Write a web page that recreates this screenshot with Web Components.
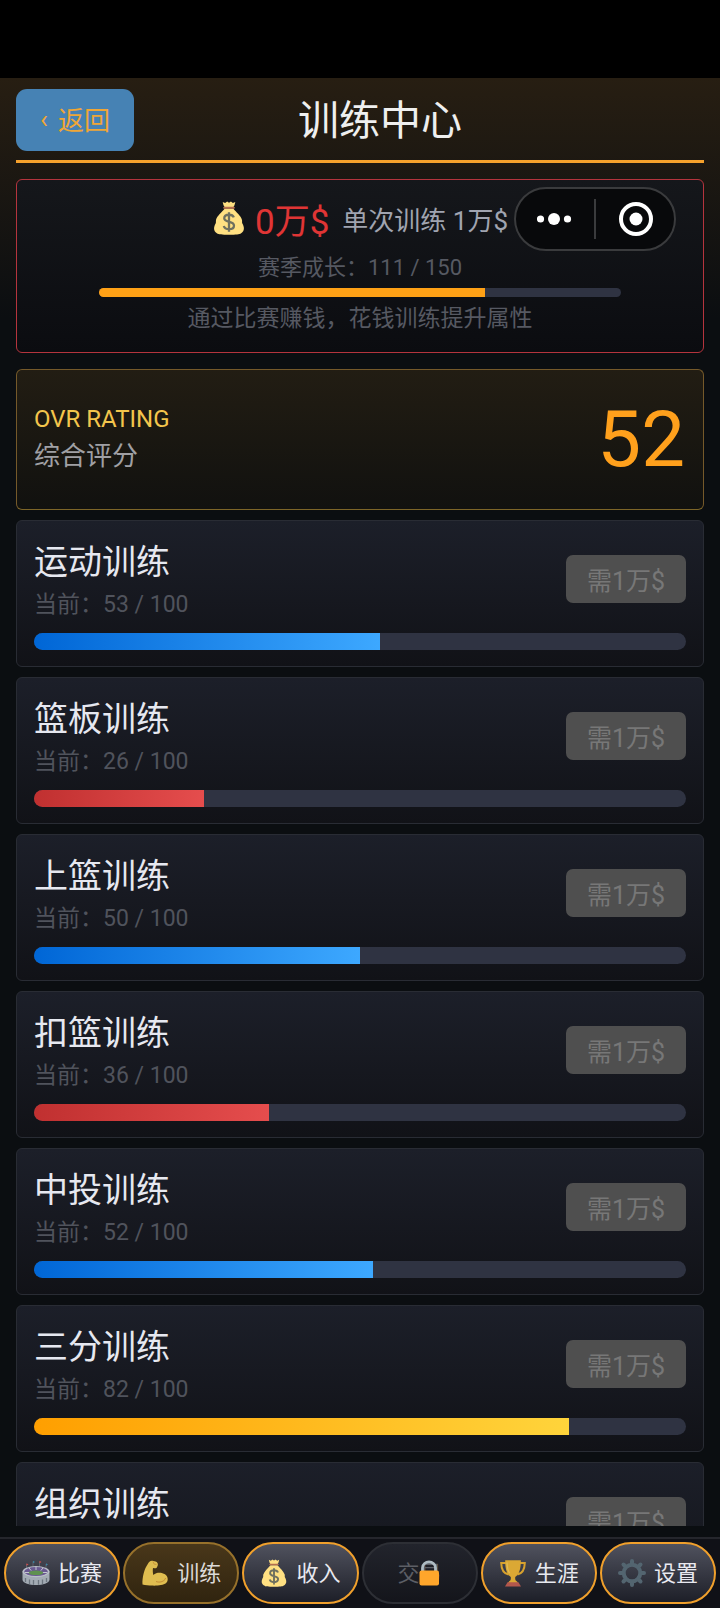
<!DOCTYPE html>
<html lang="zh-CN">
<head>
<meta charset="utf-8">
<meta name="viewport" content="width=device-width, initial-scale=1">
<title>训练中心</title>
<style>
html, body { margin: 0; height: 100%; background: #000; }
body { font-family: Roboto, "Noto Sans CJK SC", sans-serif; color: #e6e8ee; }
</style>
</head>
<body>
<training-app></training-app>
<script>
const define = (name, html, setup) => {
  const tpl = document.createElement('template');
  tpl.innerHTML = html;
  customElements.define(name, class extends HTMLElement {
    constructor() {
      super();
      this.attachShadow({ mode: 'open' }).append(tpl.content.cloneNode(true));
    }
    connectedCallback() { if (setup) setup(this, this.shadowRoot); }
  });
};

const icons = {
  bag: `<path d="M9.500 3.500 8.800.8l2 .9L12.500.4 14 1.500 15.600.4l1.600 1.300 2-.9-.7 2.700-1.300 2.300h-6.400z" fill="#ffe082"/>
    <path d="M10.500 6.200C8 9.500 4.300 12 3.300 15.600c-.3 1.200.2 1.800-.3 2.900C1.300 21.500 1 24.500 4 26.500c1.600 1.100 4 1.200 10 1.200s8.400-.1 10-1.200c3-2 2.700-5 1-8-.5-1.100 0-1.700-.3-2.900C23.700 12 20 9.500 17.500 6.200z" fill="#ffe082"/>
    <path d="M10 5.500h8" stroke="#b56f4f" stroke-width="1.600" stroke-linecap="round"/>
    <path d="M18 13.500c-.6-1.500-2-2.200-4-2.200-2.400 0-3.900 1.100-3.900 2.900 0 4 8 1.800 8 5.900 0 2-1.700 3.100-4.100 3.100-2.200 0-3.800-.9-4.300-2.600M14 9.200v16.200" fill="none" stroke="#6f705f" stroke-width="1.900"/>`,
  stadium: `<path d="M4.500 10V5M11 8V2.500M17.500 8V2.500M24 10V5" stroke="#777b84" stroke-width=".6"/>
    <path d="M4.500 4.300 6.500 5.500l-2 1.200zM17.500 1.800l2 1.200-2 1.200z" fill="#d84a48"/><path d="M11 1.800 13 3l-2 1.200zM24 4.300 26 5.500l-2 1.200z" fill="#3b86a5"/>
    <path d="M.5 12.500v8.500C1.500 24.500 7 26 14 26s12.500-1.500 13.500-5v-8.500z" fill="#a3abb4"/>
    <ellipse cx="14" cy="12.600" rx="13.500" ry="5.600" fill="#b9bec8"/><ellipse cx="14" cy="12.600" rx="11.800" ry="4.500" fill="#6a5a91"/>
    <path d="M7 9l2.200 2.600M14 8v3M21 9l-2.200 2.600M3 13.500h5M25 13.500h-5" stroke="#c4c6d0" stroke-width="1"/>
    <ellipse cx="14" cy="13.800" rx="7.200" ry="2.300" fill="#5f9150"/>
    <path d="M3.500 19v4M7.500 20.500v4.500M11.500 21v4.800M16.500 21v4.800M20.500 20.500v4.500M24.500 19v4" stroke="#6c757f" stroke-width="1.300"/>`,
  arm: `<path d="M1.500 25.500C1 18.500 3.500 9.500 6.800 5 7.800 2.900 9.300 1.300 11.500 1.700l3 .8c1.800.5 2.700 2 2.300 3.700l-.6 1.500c-.4 1.200-1.500 1.700-2.800 1.500l-1.400-.3c-.4 2.500-.2 4.500.3 7 3.400-3 8.600-2.600 11.700-.6 3.300 2.400 3.700 6.800.9 9-2.500 2-8.500 2.500-14 2.300-3-.1-6.500-.4-9.400-1.100z" fill="#dfbd50"/>
    <path d="M15 22.500c2.500 1 5.500.8 7.800-.9 1.100-.8 1.600-1.600 1.800-2.600" fill="none" stroke="#c48d35" stroke-width="1"/>
    <path d="M12 2.500l1 2.500 2.500.5" fill="none" stroke="#c48d35" stroke-width=".8"/>`,
  cup: `<path d="M7 4H2.200c.2 7 2 10.500 7.300 11.500M21 4h4.800c-.2 7-2 10.500-7.300 11.500" fill="none" stroke="#d7a12e" stroke-width="2"/>
    <path d="M6.200 1.200h15.600c.2 8.500-1.800 14.800-5.600 16.800v2c0 1.800 2.300 2.200 2.700 4H9.100c.4-1.800 2.700-2.200 2.700-4v-2C8 16 6 9.700 6.200 1.200z" fill="#dba834"/>
    <path d="M8 3.500c.2 5.500 1.200 8.600 2.500 10.800" fill="none" stroke="#e3bd58" stroke-width="1.200"/>
    <path d="M8.500 23.300h11l2.500 4.200H6z" fill="#b3574c"/>`,
  gear: `<circle cx="14" cy="14" r="8.300" fill="none" stroke="#536570" stroke-width="4"/>
    <path d="M14 2v3M14 23v3M2 14h3M23 14h3M5.500 5.500l2.100 2.100M20.400 20.400l2.100 2.100M22.500 5.500l-2.100 2.100M5.500 22.500l2.100-2.100" stroke="#536570" stroke-width="4" stroke-linecap="round"/>`,
  lock: `<path d="M7.500 12V9c0-8 13-8 13 0v3" fill="none" stroke="#aebbc2" stroke-width="2.800"/>
    <rect x="4.500" y="11.500" width="19.500" height="15" rx="2" fill="#ffa62b"/>`
};

define('ui-icon', `<style>
  :host { display: block; width: 28px; height: 28px; flex: none; }
  svg { display: block; width: 100%; height: 100%; }
</style><svg viewBox="0 0 28 28" aria-hidden="true"></svg>`,
(el, root) => { root.querySelector('svg').innerHTML = icons[el.getAttribute('name')]; });

define('progress-bar', `<style>
  :host { display: block; height: 17px; border-radius: 9px; overflow: hidden; background: #2f3342; }
  div { height: 100%; background: var(--fill, #ffa116); }
</style><div role="progressbar" aria-valuemin="0"></div>`,
(el, root) => {
  const bar = root.querySelector('div');
  const value = +el.getAttribute('value'), max = +el.getAttribute('max');
  bar.setAttribute('aria-valuenow', value);
  bar.setAttribute('aria-valuemax', max);
  bar.setAttribute('aria-label', el.getAttribute('label'));
  bar.style.width = value / max * 100 + '%';
});

define('page-header', `<style>
  :host { display: grid; grid-template-columns: 118px 1fr 78px; align-items: center; padding: 11px 0 9px; border-bottom: 3px solid #f5a12c; }
  button { display: flex; align-items: center; justify-content: center; gap: 10px; font: inherit; font-size: 26px; height: 62px; padding: 0 0 3px; border: 0; border-radius: 11px; background: #4682b4; color: #f0a636; }
  h1 { margin: 0; padding-top: 2px; font-size: 41px; line-height: 60px; font-weight: 400; text-align: center; color: #efefef; }
</style><button type="button"><span>‹</span><span>返回</span></button><h1><slot></slot></h1>`);

define('budget-card', `<style>
  :host { display: flex; flex-direction: column; align-items: center; padding: 16px 17px 17px; border: 1px solid #b5343d; border-radius: 6px; background: linear-gradient(#15171b, #0b0c10); color: #565962; font-size: 23px; }
  .money { display: flex; align-items: center; height: 44px; margin-bottom: 12px; }
  ui-icon { width: 34px; height: 34px; margin-right: 9px; }
  strong { font-weight: 400; font-size: 35px; color: #e03535; margin-right: 13px; }
  .cost { font-size: 26px; color: #a0a4b0; }
  p { margin: 0; line-height: 32px; }
  .season { font-size: 22px; }
  progress-bar { width: 80%; height: 9px; margin: 4px 0 6px; }
</style>
<div class="money"><ui-icon name="bag"></ui-icon><strong>0万$</strong><span class="cost">单次训练 1万$</span></div>
<p class="season">赛季成长：111 / 150</p>
<progress-bar value="111" max="150" label="赛季成长"></progress-bar>
<p>通过比赛赚钱，花钱训练提升属性</p>`);

define('rating-card', `<style>
  :host { display: flex; align-items: center; justify-content: space-between; padding: 20px 18px 20px 17px; border: 1px solid #75592a; border-bottom-color: #7d6528; border-radius: 6px; background: linear-gradient(#221d13, #11110f); }
  div { padding-bottom: 4px; }
  h2, p { margin: 0; font-weight: 400; }
  h2 { font-size: 24px; line-height: 36px; color: #f3c54c; }
  p { font-size: 26px; line-height: 38px; color: #a0a0a4; }
  output { font-size: 78px; line-height: 99px; color: #ffa01c; }
</style><div><h2>OVR RATING</h2><p>综合评分</p></div><output><slot></slot></output>`);

define('skill-card', `<style>
  :host { display: block; padding: 17px 17px 16px; border: 1px solid #292c34; border-radius: 6px; background: linear-gradient(#1c1f29, #111217); }
  .row { display: flex; align-items: center; justify-content: space-between; margin-bottom: 13px; }
  h2, p { margin: 0; font-weight: 400; }
  h2 { font-size: 34px; line-height: 48px; color: #e6e8f0; }
  p { font-size: 23px; line-height: 30px; padding-top: 4px; color: #50535c; }
  button { font: inherit; font-size: 25px; width: 120px; height: 48px; padding: 0; border: 0; border-radius: 7px; background: #4f4f4f; color: #777; }
  :host([level="mid"]) progress-bar { --fill: linear-gradient(90deg, #0066d6, #3da8ff); }
  :host([level="low"]) progress-bar { --fill: linear-gradient(90deg, #c03030, #e54d4d); }
  :host([level="high"]) progress-bar { --fill: linear-gradient(90deg, #ff9f00, #ffd43b); }
</style>
<div class="row"><div><h2></h2><p></p></div><button type="button" disabled>需1万$</button></div>
<progress-bar max="100"></progress-bar>`,
(el, root) => {
  root.querySelector('h2').textContent = el.getAttribute('name');
  root.querySelector('p').textContent = `当前：${el.getAttribute('value')} / 100`;
  const bar = document.createElement('progress-bar');
  bar.setAttribute('max', 100);
  bar.setAttribute('value', el.getAttribute('value'));
  bar.setAttribute('label', el.getAttribute('name'));
  root.querySelector('progress-bar').replaceWith(bar);
});

define('window-capsule', `<style>
  :host { display: flex; box-sizing: border-box; width: 162px; height: 64px; border: 2px solid #3a3b3d; border-radius: 32px; background: #08090b; }
  button { flex: 1; padding: 0; border: 0; background: none; display: grid; place-items: center; }
  i { width: 2px; height: 40px; align-self: center; background: #3a3b3d; }
  svg { display: block; width: 36px; height: 36px; }
</style>
<button type="button" aria-label="更多"><svg viewBox="0 0 36 36" fill="#fff"><circle cx="3.500" cy="18" r="3.600"/><circle cx="17" cy="18" r="6"/><circle cx="30.500" cy="18" r="3.600"/></svg></button>
<i></i>
<button type="button" aria-label="关闭"><svg viewBox="0 0 36 36"><circle cx="19" cy="18" r="15" fill="none" stroke="#fff" stroke-width="4"/><circle cx="19" cy="18" r="6.500" fill="#fff"/></svg></button>`);

define('nav-item', `<style>
  :host { display: block; flex: 1; min-width: 0; }
  button { position: relative; display: flex; align-items: center; justify-content: center; gap: 8px; box-sizing: border-box; width: 100%; height: 62px; padding: 0; border: 2px solid #f0a02c; border-radius: 31px; background: linear-gradient(#50525e, #1d1f28); color: #e8e9f0; font: inherit; font-size: 22px; white-space: nowrap; }
  span { padding-bottom: 4px; }
  :host([active]) button { border-color: #97712b; background: linear-gradient(#49371a, #30240f); color: #dcdad8; }
  :host([locked]) button { border-color: #2d2f35; background: linear-gradient(#22242c, #14151b); color: #5c5e65; }
  :host([locked]) ui-icon { position: absolute; left: 50%; top: 15px; margin-left: -5px; }
</style><button type="button"><ui-icon></ui-icon><span><slot></slot></span></button>`,
(el, root) => {
  const icon = document.createElement('ui-icon');
  icon.setAttribute('name', el.getAttribute('icon'));
  root.querySelector('ui-icon').replaceWith(icon);
  root.querySelector('button').disabled = el.hasAttribute('locked');
});

define('bottom-nav', `<style>
  :host { display: block; border-top: 2px solid #25262c; background: #101117; padding: 3px 4px 4px; }
  nav { display: flex; gap: 3px; }
</style><nav><slot></slot></nav>`);

define('training-app', `<style>
  :host { display: flex; flex-direction: column; box-sizing: border-box; height: 100vh; padding-top: 78px; position: relative; background: #000; }
  main { flex: 1; min-height: 0; display: flex; flex-direction: column; padding: 0 16px 11px; background: linear-gradient(#271e12, #0b0e11 240px); }
  budget-card { margin: 16px 0; }
  .list { flex: 1; min-height: 0; overflow: auto; scrollbar-width: none; }
  rating-card, skill-card { margin-bottom: 10px; }
  window-capsule { position: absolute; top: 187px; right: 44px; }
</style>
<main>
  <page-header>训练中心</page-header>
  <budget-card></budget-card>
  <div class="list">
    <rating-card>52</rating-card>
    <skill-card name="运动训练" value="53" level="mid"></skill-card>
    <skill-card name="篮板训练" value="26" level="low"></skill-card>
    <skill-card name="上篮训练" value="50" level="mid"></skill-card>
    <skill-card name="扣篮训练" value="36" level="low"></skill-card>
    <skill-card name="中投训练" value="52" level="mid"></skill-card>
    <skill-card name="三分训练" value="82" level="high"></skill-card>
    <skill-card name="组织训练" value="50" level="mid"></skill-card>
  </div>
</main>
<bottom-nav>
  <nav-item icon="stadium">比赛</nav-item>
  <nav-item icon="arm" active>训练</nav-item>
  <nav-item icon="bag">收入</nav-item>
  <nav-item icon="lock" locked>交易</nav-item>
  <nav-item icon="cup">生涯</nav-item>
  <nav-item icon="gear">设置</nav-item>
</bottom-nav>
<window-capsule></window-capsule>`);
</script>
</body>
</html>
